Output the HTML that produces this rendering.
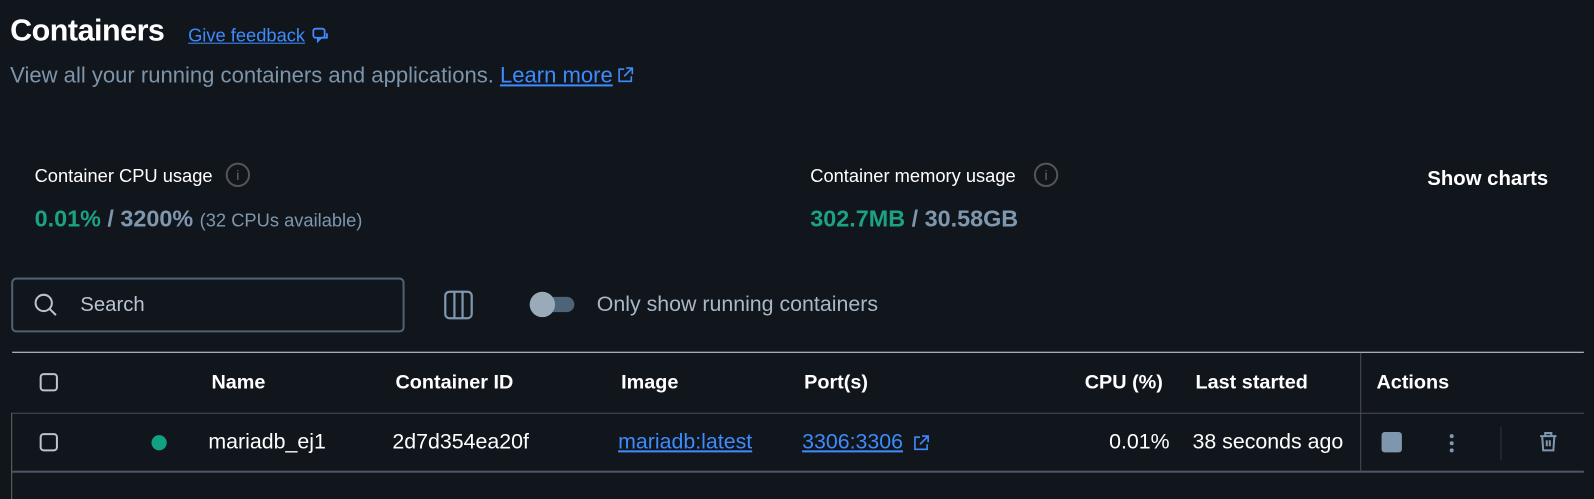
<!DOCTYPE html>
<html><head><style>
body{margin:0;width:1594px;height:491px;background:#11151c;font-family:"Liberation Sans",sans-serif;overflow:hidden;color:#fff}
#w{position:relative;width:1568px;height:483px;transform:scale(1.0166);transform-origin:0 0}
.a{position:absolute;white-space:nowrap}
.h{font-weight:bold;font-size:19.5px;color:#fff;top:365px}
.c{font-size:21px;color:#fff;top:423px}
.lnk{color:#3d8bfd !important;text-decoration:underline}
</style></head><body><div id="w">
<div class="a" style="left:10px;top:14px;font-size:30px;font-weight:bold;letter-spacing:-0.5px">Containers</div>
<div class="a lnk" style="left:185px;top:25px;font-size:18px">Give feedback</div>
<svg class="a" style="left:306px;top:26px" width="20" height="20" viewBox="0 0 18 18" fill="none" stroke="#3d8bfd" stroke-width="1.6"><rect x="2" y="2" width="10" height="8" rx="2"/><path d="M6 10v3l3-3h5V6"/></svg>
<div class="a" style="left:10px;top:61px;font-size:21.7px;color:#7d95ab">View all your running containers and applications. <span class="lnk">Learn more</span></div>
<svg class="a" style="left:606px;top:65px" width="18" height="18" viewBox="0 0 18 18" fill="none" stroke="#3d8bfd" stroke-width="1.6"><path d="M8 3H3v12h12v-5M10 2h6v6M16 2l-8 8"/></svg>

<div class="a" style="left:34px;top:163px;font-size:18px">Container CPU usage</div>
<div class="a" style="left:222px;top:160px;width:24px;height:24px;border:2px solid #555;border-radius:50%;box-sizing:border-box;color:#666;font-size:14px;text-align:center;line-height:20px">i</div>
<div class="a" style="left:34px;top:202px;font-size:23px;font-weight:bold;color:#7e97ae"><span style="color:#1aa383">0.01%</span> / 3200% <span style="font-weight:normal;font-size:18px">(32 CPUs available)</span></div>
<div class="a" style="left:797px;top:163px;font-size:18px">Container memory usage</div>
<div class="a" style="left:1017px;top:160px;width:24px;height:24px;border:2px solid #555;border-radius:50%;box-sizing:border-box;color:#666;font-size:14px;text-align:center;line-height:20px">i</div>
<div class="a" style="left:797px;top:202px;font-size:23px;font-weight:bold;color:#7e97ae"><span style="color:#1aa383">302.7MB</span> / 30.58GB</div>
<div class="a" style="left:1404px;top:165px;font-size:20px;font-weight:bold">Show charts</div>

<div class="a" style="left:11px;top:273px;width:387px;height:54px;border:2px solid #4f6173;border-radius:5px;box-sizing:border-box"></div>
<svg class="a" style="left:32px;top:287px" width="26" height="26" viewBox="0 0 26 26" fill="none" stroke="#b8c4cf" stroke-width="2"><circle cx="11" cy="11" r="8"/><path d="M17 17l6 6"/></svg>
<div class="a" style="left:79px;top:289px;font-size:20px;color:#b8c4cf">Search</div>
<svg class="a" style="left:436px;top:285px" width="30" height="30" viewBox="0 0 30 30" fill="none" stroke="#7e97ae" stroke-width="2.2"><rect x="2" y="2" width="26" height="26" rx="4"/><path d="M11 2v26M19 2v26"/></svg>
<div class="a" style="left:522px;top:292px;width:43px;height:15px;background:#4d6378;border-radius:8px"></div>
<div class="a" style="left:521px;top:287px;width:25px;height:25px;background:#99aab9;border-radius:50%"></div>
<div class="a" style="left:587px;top:288px;font-size:21px;color:#a9b8c6">Only show running containers</div>

<div class="a" style="left:12px;top:346px;width:1546px;height:1px;background:#d8dde2"></div>
<div class="a" style="left:12px;top:406px;width:1546px;height:1px;background:#4a4f55"></div>
<div class="a" style="left:12px;top:463px;width:1546px;height:2px;background:#4b5866"></div>
<div class="a" style="left:11px;top:406px;width:1px;height:85px;background:#666"></div>
<div class="a" style="left:1338px;top:347px;width:1px;height:117px;background:#4a4f55"></div>
<div class="a" style="left:1476px;top:420px;width:1px;height:33px;background:#30363d"></div>

<div class="a" style="left:39px;top:367px;width:18px;height:18px;border:2px solid #b8c4cf;border-radius:4px;box-sizing:border-box"></div>
<div class="a h" style="left:208px">Name</div>
<div class="a h" style="left:389px">Container ID</div>
<div class="a h" style="left:611px">Image</div>
<div class="a h" style="left:791px">Port(s)</div>
<div class="a h" style="left:1067px">CPU (%)</div>
<div class="a h" style="left:1176px">Last started</div>
<div class="a h" style="left:1354px">Actions</div>

<div class="a" style="left:39px;top:426px;width:18px;height:18px;border:2px solid #b8c4cf;border-radius:4px;box-sizing:border-box"></div>
<div class="a" style="left:149px;top:428px;width:15px;height:15px;background:#10a282;border-radius:50%"></div>
<div class="a c" style="left:205px">mariadb_ej1</div>
<div class="a c" style="left:386px">2d7d354ea20f</div>
<div class="a c lnk" style="left:608px">mariadb:latest</div>
<div class="a c lnk" style="left:789px">3306:3306</div>
<svg class="a" style="left:897px;top:427px" width="18" height="18" viewBox="0 0 18 18" fill="none" stroke="#3d8bfd" stroke-width="1.6"><path d="M8 3H3v12h12v-5M10 2h6v6M16 2l-8 8"/></svg>
<div class="a c" style="left:1091px">0.01%</div>
<div class="a c" style="left:1173px">38 seconds ago</div>
<div class="a" style="left:1359px;top:425px;width:20px;height:20px;background:#7e97ae;border-radius:3px"></div>
<div class="a" style="left:1426px;top:427px;width:4px;height:4px;background:#7e97ae;border-radius:50%;box-shadow:0 7px 0 #7e97ae,0 14px 0 #7e97ae"></div>
<svg class="a" style="left:1513px;top:424px" width="20" height="22" viewBox="0 0 20 22" fill="none" stroke="#7e97ae" stroke-width="2"><path d="M2 5h16M7 5V2h6v3M4 5l1 14h10l1-14M8.5 9v6M11.5 9v6"/></svg>
</div></body></html>
